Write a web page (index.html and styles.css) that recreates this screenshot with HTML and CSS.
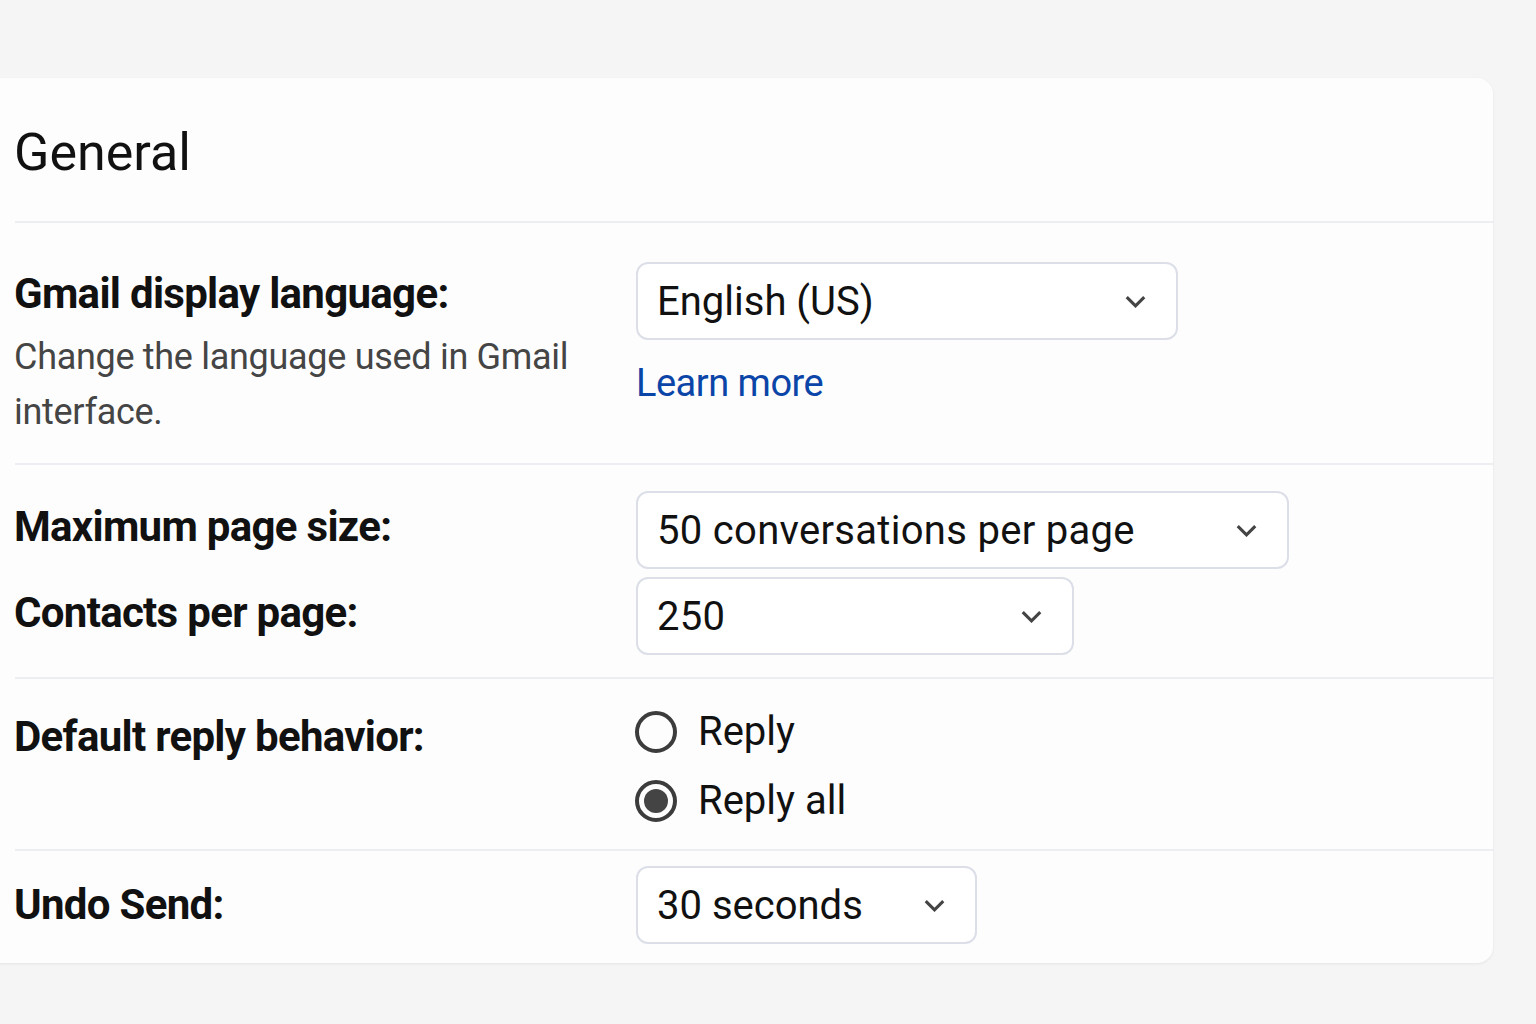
FILE: index.html
```html
<!DOCTYPE html>
<html lang="en">
<head>
    <meta charset="UTF-8">
    <meta name="viewport" content="width=device-width, initial-scale=1.0">
    <title>Settings - General</title>
    <link rel="stylesheet" href="styles.css">
</head>
<body>
    <div class="pagina">
        <div class="tarjeta">
            <div class="cabecera">
                <h1>General</h1>
            </div>

            <div class="fila fila-idioma">
                <div class="izq">
                    <div class="etiqueta">Gmail display language:</div>
                    <p class="descripcion">Change the language used in Gmail interface.</p>
                </div>
                <div class="der">
                    <div class="selector" style="width: 542px;">
                        <span>English (US)</span>
                        <svg class="flecha" viewBox="0 0 24 14"><path d="M2 2l10 10 10-10"/></svg>
                    </div>
                    <a class="enlace" href="#">Learn more</a>
                </div>
            </div>

            <div class="fila fila-tamano">
                <div class="linea">
                    <div class="etiqueta">Maximum page size:</div>
                    <div class="selector" style="width: 653px;">
                        <span>50 conversations per page</span>
                        <svg class="flecha" viewBox="0 0 24 14"><path d="M2 2l10 10 10-10"/></svg>
                    </div>
                </div>
                <div class="linea">
                    <div class="etiqueta">Contacts per page:</div>
                    <div class="selector" style="width: 438px;">
                        <span>250</span>
                        <svg class="flecha" viewBox="0 0 24 14"><path d="M2 2l10 10 10-10"/></svg>
                    </div>
                </div>
            </div>

            <div class="fila fila-respuesta">
                <div class="etiqueta">Default reply behavior:</div>
                <div class="radios">
                    <label class="radio"><span class="circulo"></span>Reply</label>
                    <label class="radio"><span class="circulo marcado"></span>Reply all</label>
                </div>
            </div>

            <div class="fila fila-deshacer">
                <div class="etiqueta">Undo Send:</div>
                <div class="selector" style="width: 341px;">
                    <span>30 seconds</span>
                    <svg class="flecha" viewBox="0 0 24 14"><path d="M2 2l10 10 10-10"/></svg>
                </div>
            </div>
        </div>
    </div>
</body>
</html>
```

FILE: styles.css
```css
body {
    margin: 0;
    padding: 0;
    background-color: #f5f5f6;
    font-family: Roboto, "Noto Sans", Arial, sans-serif;
    color: #111;
}
.pagina {
    padding-top: 78px;
    height: 946px;
    overflow: hidden;
}
.tarjeta {
    margin-left: -30px;
    width: 1480px;
    padding-left: 43px;
    height: 885px;
    background: #fdfdfd;
    border-radius: 16px;
    box-shadow: 0 1px 3px rgba(0, 0, 0, 0.07);
}
.cabecera {
    margin-left: 2px;
    padding: 44px 0 37px 0;
    border-bottom: 2px solid #eceef2;
}
.cabecera h1 {
    margin: 0 0 0 -1px;
    font-size: 52px;
    line-height: 62px;
    font-weight: 400;
    color: #111;
}
.fila {
    display: grid;
    grid-template-columns: 621px 1fr;
    margin-left: 2px;
    border-bottom: 2px solid #eceef2;
}
.fila > .etiqueta,
.fila > .izq {
    margin-left: -1px;
}
.fila:last-child {
    border-bottom: none;
}
.etiqueta {
    font-size: 42px;
    line-height: 50px;
    font-weight: 700;
    letter-spacing: -0.7px;
    color: #111;
}
.descripcion {
    margin: 11px 0 0 0;
    font-size: 36px;
    line-height: 55px;
    letter-spacing: -0.3px;
    color: #454545;
    width: 580px;
}
.fila-idioma {
    padding: 39px 0 23px 0;
}
.fila-idioma .etiqueta {
    margin-top: 7px;
}
.der {
    display: flex;
    flex-direction: column;
    align-items: flex-start;
}
.selector {
    box-sizing: border-box;
    height: 78px;
    border: 2px solid #dcdfe8;
    border-radius: 12px;
    background: #fff;
    display: flex;
    align-items: center;
    justify-content: space-between;
    padding: 0 30px 0 19px;
    font-size: 40px;
    color: #111;
}
.flecha {
    width: 21px;
    height: 13px;
    fill: none;
    stroke: #444;
    stroke-width: 3.5;
}
.enlace {
    margin-top: 20px;
    font-size: 38px;
    line-height: 46px;
    letter-spacing: -0.5px;
    color: #0b45a8;
    text-decoration: none;
}
.fila-tamano {
    display: flex;
    flex-direction: column;
    gap: 8px;
    padding: 26px 0 22px 0;
}
.linea {
    display: grid;
    grid-template-columns: 621px 1fr;
    align-items: center;
}
.linea .etiqueta {
    margin-left: -1px;
    margin-top: -6px;
}
.fila-tamano .selector span {
    letter-spacing: 0.3px;
}
.fila-respuesta {
    padding: 28px 0 23px 0;
}
.fila-respuesta .etiqueta {
    margin-top: 5px;
}
.radios {
    display: flex;
    flex-direction: column;
    gap: 19px;
}
.radio {
    display: flex;
    align-items: center;
    gap: 21px;
    font-size: 40px;
    line-height: 50px;
    color: #111;
}
.circulo {
    box-sizing: border-box;
    width: 42px;
    height: 42px;
    margin-left: -1px;
    border: 4px solid #3c3c3c;
    border-radius: 50%;
    display: flex;
    align-items: center;
    justify-content: center;
}
.marcado::after {
    content: "";
    width: 24px;
    height: 24px;
    border-radius: 50%;
    background: #444;
}
.fila-deshacer {
    padding: 15px 0 21px 0;
    align-items: center;
}
```
